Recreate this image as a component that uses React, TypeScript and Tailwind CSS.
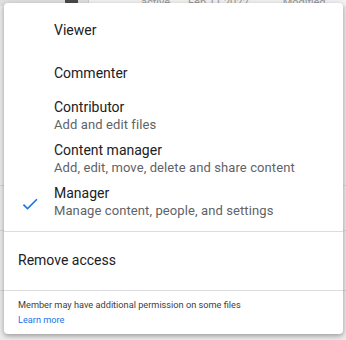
import React from "react";

function Check() {
  return (
    <svg width="20" height="20" viewBox="0 0 24 24" className="block">
      <path d="M9 16.17L4.83 12l-1.42 1.41L9 19 21 7l-1.41-1.41z" fill="#1a73e8" />
    </svg>
  );
}

type Item = { title: string; desc?: string; checked?: boolean };

const items: Item[] = [
  { title: "Viewer" },
  { title: "Commenter" },
  { title: "Contributor", desc: "Add and edit files" },
  { title: "Content manager", desc: "Add, edit, move, delete and share content" },
  { title: "Manager", desc: "Manage content, people, and settings", checked: true },
];

export default function App() {
  return (
    <div
      className="relative w-[346px] h-[340px] overflow-hidden bg-[#ebebeb]"
      style={{ fontFamily: "Roboto, 'Noto Sans', Arial, sans-serif" }}
    >
      {/* background page hints */}
      <div className="flex h-[6px]">
        <div className="w-[88px] bg-[#e0e0e0]" />
        <div className="w-px bg-[#d0d0d0]" />
        <div className="flex-1 bg-[#f3f3f3] flex text-[11px] leading-[6px] text-[#9a9a9a] items-end overflow-hidden">
          <span className="ml-[52px]">active</span>
          <span className="ml-[18px]">Feb 11 2022</span>
          <span className="ml-[34px]">Modified</span>
        </div>
      </div>
      <div className="absolute left-0 top-[185px] w-[346px] h-px bg-[#d6d6d6]" />
      <div className="absolute left-0 top-[230px] w-[346px] h-px bg-[#d6d6d6]" />
      <div className="absolute left-0 top-[290px] w-[346px] h-px bg-[#d6d6d6]" />
      <div className="absolute left-[65px] top-[-8px] w-[13px] h-[14px] rounded-[4px] bg-[#4a4a4a]" />

      {/* menu */}
      <div className="absolute left-[4px] top-[3px] w-[339px] h-[331px] bg-white rounded-[4px] shadow-[0_2px_4px_rgba(0,0,0,0.25),0_1px_8px_rgba(0,0,0,0.12)] flex flex-col pt-[5px]">
        <div className="flex flex-col pb-[8px]">
          {items.map((it) => (
            <div key={it.title} className="flex items-center h-[43px]">
              <div className="w-[50px] flex justify-center pl-[1px] pt-[4px]">
                {it.checked ? <Check /> : null}
              </div>
              <div className="flex flex-col">
                <div className="text-[14px] leading-[18px] text-[#202124]">{it.title}</div>
                {it.desc ? (
                  <div className="text-[13px] leading-[18px] tracking-[0.1px] text-[#5f6368]">{it.desc}</div>
                ) : null}
              </div>
            </div>
          ))}
        </div>
        <div className="h-px bg-[#dadce0]" />
        <div className="h-[58px] flex items-center pl-[14px] pb-[2px] text-[14px] text-[#202124]">Remove access</div>
        <div className="h-px bg-[#dadce0]" />
        <div className="flex flex-col pl-[14px] pt-[6px] text-[9.2px] leading-[15px]">
          <div className="text-[#3c4043]">Member may have additional permission on some files</div>
          <div className="text-[#1a73e8]">Learn more</div>
        </div>
      </div>
    </div>
  );
}
